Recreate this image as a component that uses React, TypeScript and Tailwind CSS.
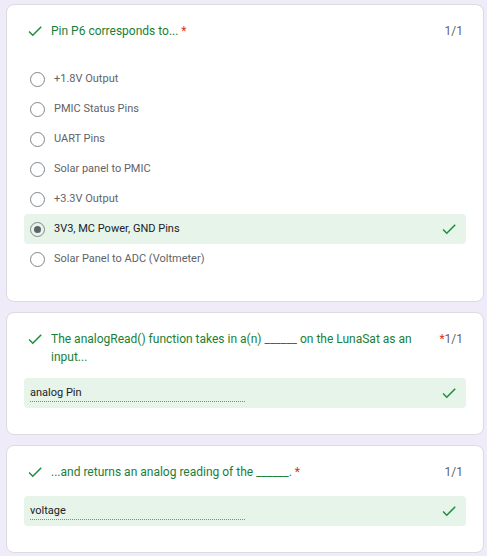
import React from "react";

const font = { fontFamily: "Roboto, 'Noto Sans', Arial, sans-serif" };

function Check({ className = "" }: { className?: string }) {
  return (
    <svg viewBox="0 0 24 24" width="18" height="18" className={className} fill="#1e8e3e">
      <path d="M9 16.17L4.83 12l-1.42 1.41L9 19 21 7l-1.41-1.41z" />
    </svg>
  );
}

function Radio({ checked }: { checked?: boolean }) {
  return (
    <span className="w-[15px] h-[15px] rounded-full border-[1.5px] border-[#80868b] flex items-center justify-center shrink-0">
      {checked && <span className="w-[7px] h-[7px] rounded-full bg-[#5f6368]" />}
    </span>
  );
}

const options = [
  "+1.8V Output",
  "PMIC Status Pins",
  "UART Pins",
  "Solar panel to PMIC",
  "+3.3V Output",
  "3V3, MC Power, GND Pins",
  "Solar Panel to ADC (Voltmeter)",
];

function Header({ title, star, starWithScore }: { title: string; star?: boolean; starWithScore?: boolean }) {
  return (
    <div className="flex items-start pl-[2px] pr-[3px]">
      <Check className="shrink-0" />
      <div className="flex-1 ml-[7px] text-[12px] leading-[18px] text-[#188038]">
        <span className="block max-w-[370px]">
          {title}
          {star && <span className="text-[#d93025]"> *</span>}
        </span>
      </div>
      <div className="text-[12px] leading-[18px] text-[#5f6368] ml-4">
        {starWithScore && <span className="text-[#d93025]">*</span>}1/1
      </div>
    </div>
  );
}

function AnswerBox({ value }: { value: string }) {
  return (
    <div className="h-[30px] rounded bg-[#e6f4ea] flex items-center justify-between pl-[6px] pr-[8px]">
      <div className="w-[215px] border-b border-dotted border-[#80868b] text-[11px] leading-[15px] text-[#202124] pb-[1px]">
        {value}
      </div>
      <Check />
    </div>
  );
}

export default function App() {
  return (
    <div className="bg-[#f0ebf8] w-[487px] h-[556px] pl-[6px] pr-[3px] pt-[4px] flex flex-col gap-[10px]" style={font}>
      {/* question 1 */}
      <div className="bg-white rounded-lg border border-[#dadce0] px-[17px] pt-[17px] pb-[27px]">
        <Header title="Pin P6 corresponds to..." star />
        <div className="mt-[24px] flex flex-col">
          {options.map((o, i) => {
            const sel = i === 5;
            return (
              <div
                key={o}
                className={`h-[30px] rounded flex items-center pl-[6px] pr-[8px] ${sel ? "bg-[#e6f4ea]" : ""}`}
              >
                <Radio checked={sel} />
                <span className={`ml-[9px] flex-1 text-[11px] ${sel ? "text-[#202124]" : "text-[#5f6368]"}`}>{o}</span>
                {sel && <Check />}
              </div>
            );
          })}
        </div>
      </div>

      {/* question 2 */}
      <div className="bg-white rounded-lg border border-[#dadce0] px-[17px] pt-[17px] pb-[26px]">
        <Header title="The analogRead() function takes in a(n) ______ on the LunaSat as an input..." starWithScore />
        <div className="mt-[12px]">
          <AnswerBox value="analog Pin" />
        </div>
      </div>

      {/* question 3 */}
      <div className="bg-white rounded-lg border border-[#dadce0] px-[17px] pt-[17px] pb-[26px]">
        <Header title="...and returns an analog reading of the ______." star />
        <div className="mt-[15px]">
          <AnswerBox value="voltage" />
        </div>
      </div>
    </div>
  );
}
